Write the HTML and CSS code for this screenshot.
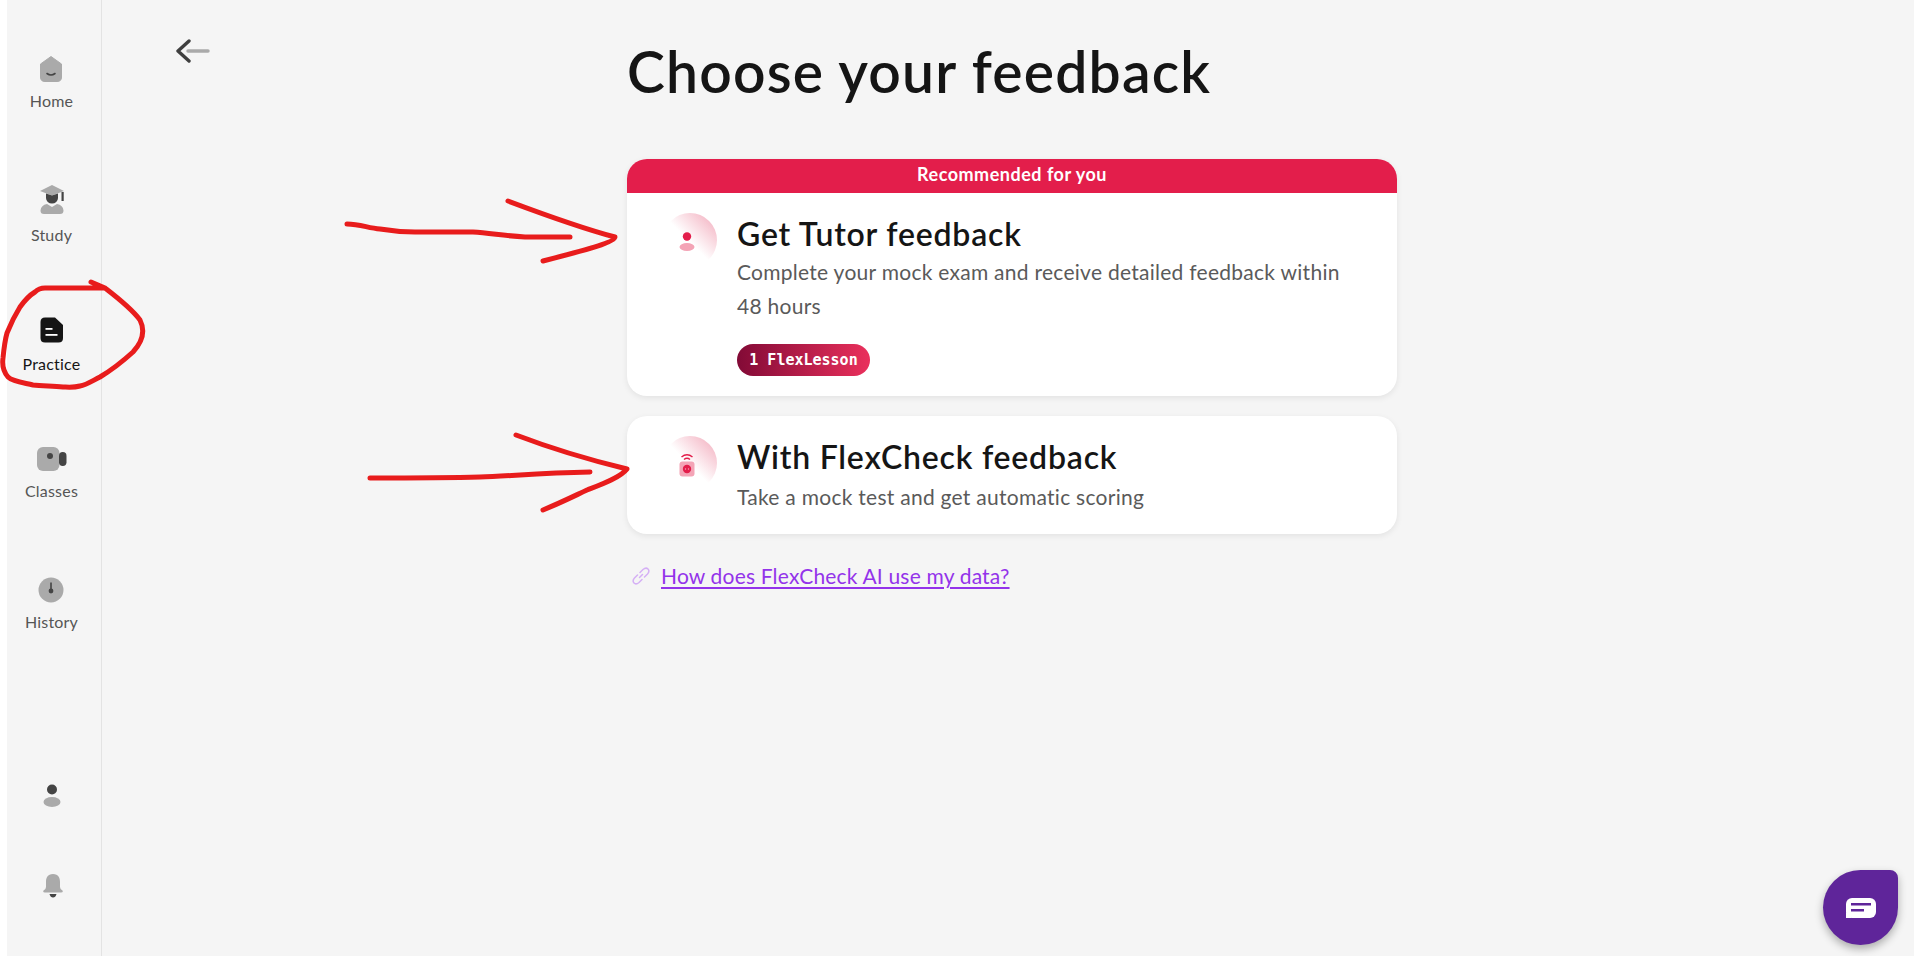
FILE: index.html
```html
<!DOCTYPE html>
<html lang="en">
<head>
<meta charset="utf-8">
<title>Choose your feedback</title>
<link rel="stylesheet" href="styles.css">
</head>
<body>
<div class="app">
  <nav class="sidebar">
    <a class="nav-item home">
      <svg class="nav-icon" viewBox="0 0 24 26" width="24" height="26"><path fill="#aaa" d="M12 0.5 L22.5 8 V21 Q22.500 25.500 18 25.500 H6 Q1.500 25.500 1.500 21 V8 Z" stroke="#aaa" stroke-linejoin="round"/><path d="M8 17.500 Q12 20.500 16 17.500" fill="none" stroke="#444" stroke-width="1.600" stroke-linecap="round"/></svg>
      <span>Home</span>
    </a>
    <a class="nav-item study">
      <svg class="nav-icon" viewBox="0 0 26 30" width="26" height="30"><path fill="#aaa" d="M13 0 L25 6 L13 10.500 L1 6 Z"/><path fill="#444" d="M7 8.500 L13 10.500 L19 8.500 V13 A6 5.500 0 0 1 7 13 Z"/><rect x="22.500" y="7" width="2.200" height="9" fill="#444"/><path fill="#aaa" d="M8 19 L13 22 L18 19 Q24 20 24.500 25.500 Q24.500 29 21 29 H5 Q1.500 29 1.500 25.500 Q2 20 8 19 Z"/></svg>
      <span>Study</span>
    </a>
    <a class="nav-item active">
      <svg class="nav-icon" viewBox="0 0 24 26" width="24" height="26"><path fill="#151515" d="M5 0.500 H15 L23 8 V21 Q23 25.500 18.500 25.500 H5 Q0.500 25.500 0.500 21 V5 Q0.500 0.500 5 0.500 Z"/><rect x="5.500" y="11" width="7" height="1.800" fill="#fff"/><rect x="5.500" y="17" width="12" height="1.800" fill="#fff"/></svg>
      <span>Practice</span>
    </a>
    <a class="nav-item classes">
      <svg class="nav-icon" viewBox="0 0 30 24" width="30" height="24"><rect x="0" y="0" width="22.500" height="24" rx="6" fill="#aaa"/><circle cx="13" cy="9" r="3" fill="#444"/><rect x="22" y="5" width="7.500" height="14" rx="3.700" fill="#444"/></svg>
      <span>Classes</span>
    </a>
    <a class="nav-item history">
      <svg class="nav-icon" viewBox="0 0 26 26" width="26" height="26"><circle cx="13" cy="13" r="12.500" fill="#aaa"/><rect x="12.200" y="5.500" width="1.600" height="8" fill="#444"/><circle cx="13" cy="14" r="2.400" fill="#444"/></svg>
      <span>History</span>
    </a>
    <div class="nav-bottom">
      <svg class="person" viewBox="0 0 18 24" width="18" height="24"><circle cx="9" cy="5.500" r="5" fill="#444"/><ellipse cx="9" cy="18" rx="8.500" ry="5" fill="#aaa"/></svg>
      <svg class="bell" viewBox="0 0 20 24" width="20" height="24"><path fill="#aaa" d="M10 0 C15.500 0 17 4 17 8 V13 Q17 15 19.500 16.500 Q20.500 18.500 18 18.500 H2 Q-0.500 18.500 0.500 16.500 Q3 15 3 13 V8 C3 4 4.500 0 10 0 Z"/><path fill="#444" d="M6.500 20 H13.500 Q12.500 23.500 10 23.500 Q7.500 23.500 6.500 20 Z"/></svg>
    </div>
  </nav>

  <main class="main">
    <a class="back">
      <svg viewBox="0 0 34 24" width="34" height="24"><path d="M12 12 H32" stroke="#aaa" stroke-width="3.400" stroke-linecap="round" fill="none"/><path d="M13 2 L2 12 L13 22" stroke="#3f3f3f" stroke-width="3.400" stroke-linecap="round" stroke-linejoin="round" fill="none"/></svg>
    </a>
    <section class="content">
      <h1 class="title">Choose your feedback</h1>

      <article class="card">
        <div class="ribbon">Recommended for you</div>
        <div class="card-body">
          <div class="badge-icon">
            <svg viewBox="0 0 16 20" width="16" height="20"><circle cx="8" cy="4.500" r="4.200" fill="#e31e4b"/><ellipse cx="8" cy="15" rx="7.500" ry="4" fill="#f4a4b6"/></svg>
          </div>
          <div class="card-text">
            <h2>Get Tutor feedback</h2>
            <p>Complete your mock exam and receive detailed feedback within 48 hours</p>
            <span class="pill">1 FlexLesson</span>
          </div>
        </div>
      </article>

      <article class="card">
        <div class="card-body second">
          <div class="badge-icon">
            <svg viewBox="0 0 16 24" width="16" height="24"><path d="M2.500 4 Q8 -0.500 13.500 4" fill="none" stroke="#e31e4b" stroke-width="1.500"/><path d="M5 6.500 Q8 4 11 6.500" fill="none" stroke="#e31e4b" stroke-width="1.500"/><rect x="0.500" y="8.500" width="15" height="15" rx="3" fill="#f4a4b6"/><circle cx="8" cy="16" r="4.200" fill="#e31e4b"/><circle cx="6.500" cy="16" r="0.700" fill="#f4a4b6"/><circle cx="9.500" cy="16" r="0.700" fill="#f4a4b6"/></svg>
          </div>
          <div class="card-text">
            <h2>With FlexCheck feedback</h2>
            <p>Take a mock test and get automatic scoring</p>
          </div>
        </div>
      </article>

      <div class="help">
        <svg viewBox="0 0 20 20" width="20" height="20"><path d="M8.500 11.500 L11.500 8.500 M6.500 9 L3.500 12 Q1 15 3 17 Q5 19 8 16.500 L11 13.500 M9 6.500 L12 3.500 Q15 1 17 3 Q19 5 16.500 8 L13.500 11" fill="none" stroke="#d5b0f5" stroke-width="1.500" stroke-linecap="round"/></svg>
        <a class="help-link">How does FlexCheck AI use my data?</a>
      </div>
    </section>
  </main>
</div>

<svg class="scribbles" viewBox="0 0 1914 956" width="1914" height="956">
  <g fill="none" stroke="#e81c1c" stroke-linecap="round" stroke-linejoin="round">
    <path stroke-width="5" d="M91 282 L105 288 C118 298 132 309 140 320 C145 330 144 340 133 352 C122 362 110 371 100 377 C92 381 86 385 80 386 C73 388 66 387 63 387 C52 386 42 386 33 385 C20 382 12 381 8 377 C3 371 2 365 3 358 C4 348 5 340 7 333 C11 323 15 315 20 307 C25 300 30 295 35 292 C38 289 41 288 45 288 L105 288"/>
    <path stroke-width="5" d="M347 224 C360 224 368 228 380 229 C392 231 400 232 415 232 C435 232 455 232 473 232 C490 233 505 236 525 237 C540 237 555 237 570 237"/>
    <path stroke-width="5" d="M508 201 C540 213 585 229 615 237 C615 242 590 249 543 261"/>
    <path stroke-width="5" d="M370 478 C410 478 445 478 480 477 C510 476 540 473 590 472"/>
    <path stroke-width="5" d="M516 435 C550 448 590 460 627 469 C620 478 600 485 587 490 C570 498 560 503 543 510"/>
  </g>
</svg>

<button class="chat" aria-label="Chat">
  <svg viewBox="0 0 30 20" width="30" height="20"><rect x="0" y="0" width="30" height="20" rx="6" fill="#fff"/><path d="M0 14 V20 H6 Z" fill="#fff"/><rect x="5" y="5" width="20" height="2.500" fill="#5f259a"/><rect x="5" y="11" width="13" height="2.500" fill="#5f259a"/></svg>
</button>
</body>
</html>
```

FILE: styles.css
```css
* { box-sizing: border-box; }
html, body { margin: 0; height: 100%; }
body {
  background: #f5f5f5;
  font-family: "Lato", "Liberation Sans", sans-serif;
  color: #151515;
  overflow: hidden;
}
.app {
  display: flex;
  height: 956px;
  border-left: 7px solid #ffffff;
}
.sidebar {
  width: 95px;
  flex: none;
  display: flex;
  flex-direction: column;
  align-items: center;
  padding: 56px 5px 0 0;
  border-right: 1px solid #e3e3e3;
}
.nav-item {
  display: flex;
  flex-direction: column;
  align-items: center;
  font-size: 16px;
  color: #555;
  letter-spacing: 0.2px;
}
.nav-item span { line-height: 20px; }
.nav-icon { display: block; }
.home { height: 128px; }
.home .nav-icon { margin-bottom: 9px; }
.study { height: 130px; }
.study .nav-icon { margin: 1px 0 10px; }
.active { color: #151515; height: 127px; }
.active .nav-icon { margin: 3px 0 11px; }
.classes { height: 134px; }
.classes .nav-icon { margin: 6px 0 10px; }
.history { height: 130px; }
.history .nav-icon { margin: 2px 0 9px; }
.nav-bottom {
  margin-top: auto;
  padding-bottom: 58px;
  display: flex;
  flex-direction: column;
  align-items: center;
  gap: 66px;
}
.bell { margin-left: 3px; }
.main {
  flex: 1;
  display: flex;
  align-items: flex-start;
  padding-left: 74px;
}
.back {
  width: 34px;
  flex: none;
  margin-top: 39px;
  margin-right: 417px;
}
.back svg { display: block; }
.content {
  width: 770px;
  flex: none;
}
.title {
  margin: 36px 0 0;
  font-size: 57px;
  line-height: 70px;
  font-weight: 600;
  letter-spacing: 1.2px;
  color: #151515;
}
.card {
  background: #fff;
  border-radius: 20px;
  overflow: hidden;
  box-shadow: 0 2px 6px rgba(0, 0, 0, 0.08);
  margin-top: 20px;
}
.title + .card { margin-top: 53px; }
.ribbon {
  height: 34px;
  background: #e31e4b;
  color: #fff;
  text-align: center;
  font-size: 18px;
  font-weight: 700;
  letter-spacing: 0.5px;
  line-height: 30px;
}
.card-body {
  display: flex;
  padding: 20px 40px 20px 36px;
}
.badge-icon {
  width: 54px;
  height: 54px;
  flex: none;
  margin-right: 20px;
  padding: 4px 6px 0 0;
  border-radius: 50%;
  background: linear-gradient(45deg, #ffffff 48%, #f2a9ba 100%);
  display: flex;
  align-items: center;
  justify-content: center;
}
.card-text { flex: 1; }
.card-text h2 {
  margin: 0;
  padding-top: 1px;
  font-size: 32px;
  line-height: 40px;
  font-weight: 600;
  letter-spacing: 0.78px;
  color: #151515;
}
.card-text p {
  margin: 1px 0 0;
  font-size: 21px;
  line-height: 34px;
  color: #5a5a5a;
  letter-spacing: 0.27px;
}
.second .card-text p { margin-top: 3px; }
.pill {
  display: block;
  margin-top: 21px;
  height: 32px;
  width: 133px;
  border-radius: 16px;
  background: linear-gradient(90deg, #820a36, #ea305c);
  color: #fff;
  font-family: "DejaVu Sans Mono", "Liberation Mono", monospace;
  font-size: 15px;
  font-weight: 700;
  line-height: 32px;
  text-align: center;
}
.help {
  display: flex;
  align-items: center;
  gap: 10px;
  margin-top: 27px;
  padding-left: 4px;
}
.help svg { display: block; }
.help-link {
  font-size: 21px;
  line-height: 30px;
  color: #9333ea;
  letter-spacing: 0.18px;
  text-decoration: underline;
  text-underline-offset: 3px;
}
.scribbles {
  position: absolute;
  left: 0;
  top: 0;
  pointer-events: none;
}
.chat {
  position: absolute;
  left: 1823px;
  top: 870px;
  width: 75px;
  height: 75px;
  padding: 0;
  border: 0;
  border-radius: 50% 8px 50% 50%;
  background: #5f259a;
  box-shadow: 0 4px 8px rgba(0, 0, 0, 0.3);
  display: flex;
  align-items: center;
  justify-content: center;
}
```
